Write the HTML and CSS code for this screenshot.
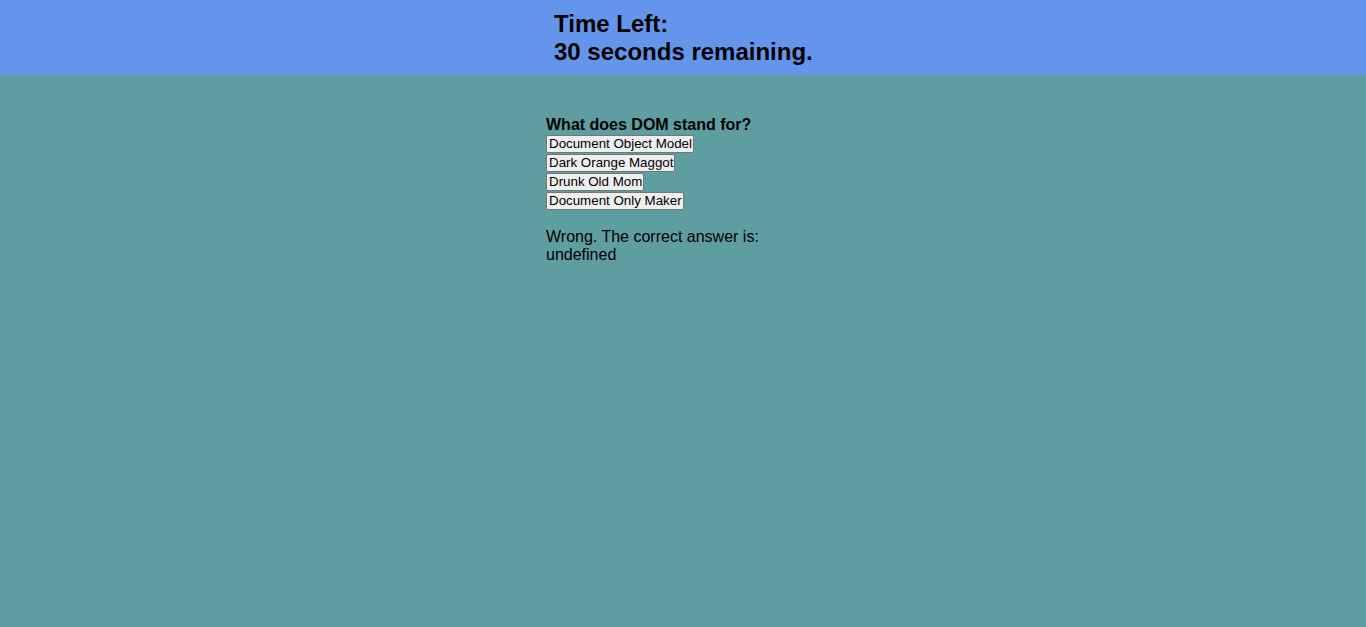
FILE: index.html
```html
<!DOCTYPE html>
<html>
<head>
<meta charset="utf-8">
<link rel="stylesheet" href="styles.css">
</head>
<body>
<header class="timer-bar">
  <div class="wrap">
    <div class="timer">Time Left:<br>30 seconds remaining.</div>
  </div>
</header>
<main class="wrap quiz">
  <div class="question">What does DOM stand for?</div>
  <div class="choices">
    <button class="choice">Document Object Model</button>
    <button class="choice">Dark Orange Maggot</button>
    <button class="choice">Drunk Old Mom</button>
    <button class="choice">Document Only Maker</button>
  </div>
  <p class="result">Wrong. The correct answer is:<br>undefined</p>
</main>
</body>
</html>
```

FILE: styles.css
```css
html, body {
  margin: 0;
  height: 100%;
}
body {
  background: #5f9ea0;
  font-family: "Liberation Sans", Arial, sans-serif;
  color: #000;
}
.wrap {
  width: 274px;
  margin: 0 auto;
}
.timer-bar {
  background: #6495ed;
  padding: 10px 0 9px;
}
.timer {
  padding-left: 8px;
  font-size: 24px;
  font-weight: bold;
}
.quiz {
  padding-top: 41px;
}
.question {
  font-size: 16px;
  font-weight: bold;
}
.choices {
  display: flex;
  flex-direction: column;
  align-items: flex-start;
  gap: 1px;
  margin-top: 1px;
}
.choice {
  font-family: "Liberation Sans", Arial, sans-serif;
  font-size: 13.333px;
  color: #000;
  background: #efefef;
  border: 1px solid #767676;
  border-radius: 2px;
  padding: 0 1px 0 2px;
  height: 18px;
  line-height: 16px;
}
.result {
  margin: 18px 0 0;
  font-size: 16px;
}
```
